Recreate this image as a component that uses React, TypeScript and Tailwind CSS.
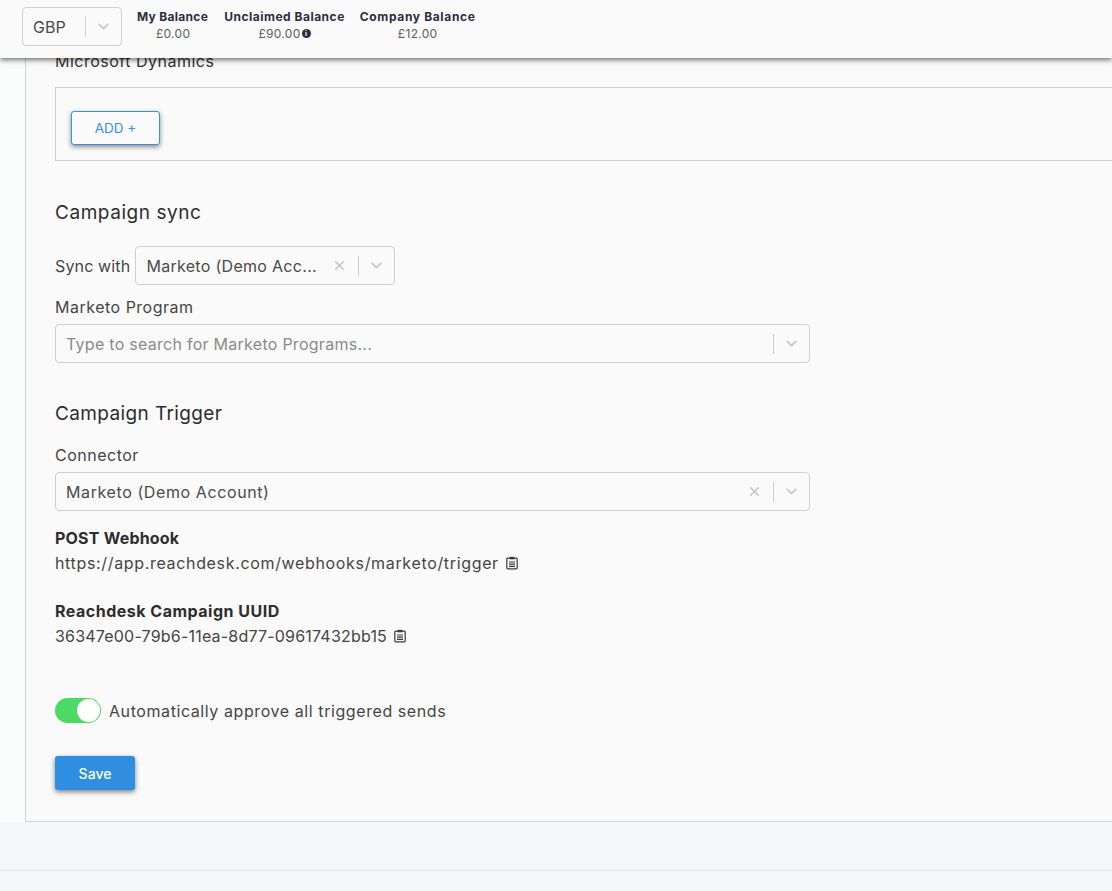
import React from "react";
import { ChevronDown, X } from "lucide-react";

const Indicators = ({ clear = false }: { clear?: boolean }) => (
  <div className="flex items-center shrink-0">
    {clear && <X size={15} strokeWidth={2.5} className="text-[#c4c4c4] mr-[11px]" />}
    <span className="w-px h-[20px] bg-[#cfcfcf]" />
    <ChevronDown size={17} strokeWidth={2.5} className="text-[#c8c8c8] mx-[9px]" />
  </div>
);

const Select = ({
  value,
  placeholder,
  clear,
  className,
  textClass,
}: {
  value?: string;
  placeholder?: string;
  clear?: boolean;
  className?: string;
  textClass?: string;
}) => (
  <div className={`flex items-center h-[39px] border border-[#d0d0d0] rounded-[4px] bg-[#fafafa] pl-[10px] ${className}`}>
    <span className={`flex-1 truncate text-[16px] ${textClass} ${value ? "text-[#4a4a4a]" : "text-[#8b8b8b]"}`}>
      {value || placeholder}
    </span>
    <Indicators clear={clear} />
  </div>
);

const ClipboardIcon = () => (
  <svg width="14" height="14" viewBox="0 0 14 14" fill="none" stroke="#3a3a3a" strokeWidth="1.2" className="shrink-0">
    <rect x="1.8" y="2.2" width="10.4" height="10.6" rx="1" />
    <rect x="4.6" y="0.9" width="4.8" height="2.4" fill="#3a3a3a" stroke="none" />
    <path d="M4 6h6M4 8.2h6M4 10.4h6" />
  </svg>
);

const Balance = ({
  label,
  labelClass,
  children,
}: {
  label: string;
  labelClass: string;
  children: React.ReactNode;
}) => (
  <div className="flex flex-col items-center">
    <span className={`text-[12px] leading-[17px] font-bold text-[#2b2d42] ${labelClass}`}>{label}</span>
    <span className="text-[12px] tracking-[0.3px] leading-[17px] text-[#5c5c5c] flex items-center">{children}</span>
  </div>
);

export default function App() {
  return (
    <div
      className="relative h-[891px] overflow-hidden bg-[#f3f7fa] text-[#2d2d2d]"
      style={{ fontFamily: "Inter, 'Noto Sans', sans-serif" }}
    >
      {/* top bar sits over the scrolled page */}
      <header className="absolute top-0 inset-x-0 z-10 h-[58px] bg-[#fafafa] shadow-[0_2px_5px_rgba(0,0,0,0.55)] flex items-start pt-[7px] pl-[22px]">
        <div className="flex items-center w-[100px] h-[39px] border border-[#d0d0d0] rounded-[4px] pl-[10px] mr-[15px]">
          <span className="flex-1 text-[16px] text-[#4a4a4a]">GBP</span>
          <span className="w-px h-[20px] bg-[#d4d4d4]" />
          <ChevronDown size={17} strokeWidth={2.5} className="text-[#c8c8c8] mx-[9px]" />
        </div>
        <div className="flex gap-[15px] pt-[1px]">
          <Balance label="My Balance" labelClass="tracking-[0.3px] mr-px">£0.00</Balance>
          <Balance label="Unclaimed Balance" labelClass="tracking-[0.5px]">
            £90.00
            <span className="ml-px w-[9px] h-[9px] rounded-full bg-[#2b2d42] text-white text-[7px] leading-[9px] font-bold text-center">i</span>
          </Balance>
          <Balance label="Company Balance" labelClass="tracking-[0.65px]">£12.00</Balance>
        </div>
      </header>

      <main className="flex flex-col h-[871px] border-b border-[#e1e4e8]">
        <div className="h-[822px] bg-[#fafbfb] pl-[25px]">
          <div className="h-full pl-[29px] pt-[49px] bg-[#fafafa] border-l border-b border-[#d4d4d4]">
            <p className="text-[16px] tracking-[0.5px] leading-[24px] text-[#333]">Microsoft Dynamics</p>
            <div className="mt-[14px] h-[74px] -mr-px border border-[#d0d0d0] pl-[15px] pt-[23px]">
              <button className="w-[89px] h-[34px] bg-[#fafafa] border border-[#3b90e0] rounded-[3px] text-[#3b90e0] text-[13.5px] shadow-[0_2px_5px_rgba(0,0,0,0.45)]">
                ADD +
              </button>
            </div>

            <h2 className="mt-[40px] text-[19px] tracking-[0.55px] leading-[24px] text-[#2d2d2d]">Campaign sync</h2>
            <div className="mt-[21px] flex items-center gap-[5px] text-[16px] text-[#454545]">
              <span className="tracking-[0.15px]">Sync with</span>
              <Select value="Marketo (Demo Acc..." clear textClass="tracking-[0.3px]" className="w-[260px]" />
            </div>
            <p className="mt-[10px] text-[16px] tracking-[0.5px] leading-[24px] text-[#454545]">Marketo Program</p>
            <Select placeholder="Type to search for Marketo Programs..." textClass="tracking-[0.27px]" className="mt-[5px] w-[755px]" />

            <h2 className="mt-[39px] text-[19px] tracking-[0.38px] leading-[24px] text-[#2d2d2d]">Campaign Trigger</h2>
            <p className="mt-[17px] text-[16px] tracking-[0.5px] leading-[24px] text-[#454545]">Connector</p>
            <Select value="Marketo (Demo Account)" clear textClass="tracking-[0.6px]" className="mt-[5px] w-[755px]" />

            <p className="mt-[15px] text-[16px] tracking-[0.2px] leading-[24px] font-bold text-[#2d2d2d]">POST Webhook</p>
            <div className="mt-[1px] flex items-center gap-[6px] text-[16px] leading-[24px] text-[#454545]">
              <span className="tracking-[0.66px]">https://app.reachdesk.com/webhooks/marketo/trigger</span>
              <ClipboardIcon />
            </div>
            <p className="mt-[24px] text-[16px] tracking-[0.5px] leading-[24px] font-bold text-[#2d2d2d]">Reachdesk Campaign UUID</p>
            <div className="mt-[1px] flex items-center gap-[6px] text-[16px] leading-[24px] text-[#454545]">
              <span className="tracking-[0.2px]">36347e00-79b6-11ea-8d77-09617432bb15</span>
              <ClipboardIcon />
            </div>

            <div className="mt-[50px] flex items-center gap-[8px]">
              <div className="w-[46px] h-[25px] rounded-full bg-[#4cd964] flex items-center justify-end pr-px">
                <span className="w-[23px] h-[23px] rounded-full bg-white" />
              </div>
              <span className="text-[16px] tracking-[0.58px] text-[#454545]">Automatically approve all triggered sends</span>
            </div>
            <button className="mt-[33px] block w-[80px] h-[34px] rounded-[3px] bg-[#2f8ee0] text-white text-[14px] font-medium shadow-[0_2px_5px_rgba(0,0,0,0.5)]">
              Save
            </button>
          </div>
        </div>
      </main>
    </div>
  );
}
